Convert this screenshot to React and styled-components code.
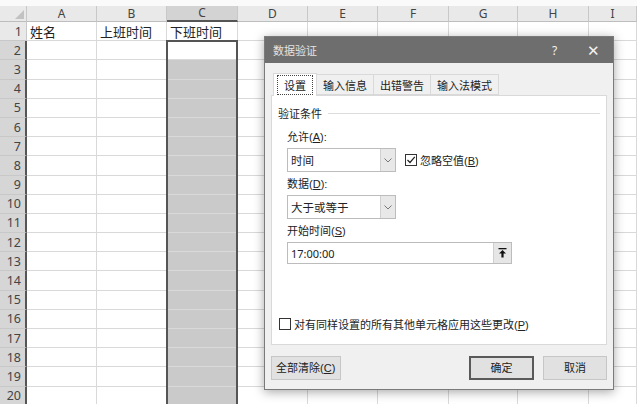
import React from "react";
import styled, { createGlobalStyle } from "styled-components";

const Global = createGlobalStyle`
  html, body { margin: 0; padding: 0; background: #fff; }
  body { font-family: "Liberation Sans", "Noto Sans CJK SC", sans-serif; overflow: hidden; }
  * { box-sizing: border-box; }
`;

const Page = styled.div`
  position: relative;
  width: 637px;
  height: 404px;
  overflow: hidden;
`;

const Sheet = styled.div`
  display: grid;
  grid-template-columns: 27px 70px 70px 71px 70px 70px 71px 69px 71px 1fr;
  grid-template-rows: 6px 16px repeat(20, 19.2px);
  width: 637px;
`;

const TopStrip = styled.div`
  grid-column: 1 / -1;
  grid-row: 1;
  background: #fafafa;
`;

const Corner = styled.div`
  grid-column: 1;
  grid-row: 2;
  background: #e9e9e9;
  border-right: 1px solid #c8c8c8;
  border-bottom: 1px solid #bdbdbd;
  position: relative;
  &::after {
    content: "";
    position: absolute;
    right: 2px;
    bottom: 2px;
    border-left: 9px solid transparent;
    border-bottom: 9px solid #c2c2c2;
  }
`;

const ColHead = styled.div`
  grid-column: ${(p) => p.$c};
  grid-row: 2;
  display: flex;
  align-items: center;
  justify-content: center;
  font-family: "Noto Sans", "DejaVu Sans", sans-serif;
  font-size: 12px;
  color: #444;
  background: ${(p) => (p.$sel ? "#d3d3d3" : "#e9e9e9")};
  border-right: 1px solid #c8c8c8;
  border-bottom: ${(p) => (p.$sel ? "2px solid #555" : "1px solid #bdbdbd")};
  line-height: 1;
`;

const RowHead = styled.div`
  grid-column: 1;
  grid-row: ${(p) => p.$r};
  display: flex;
  align-items: center;
  justify-content: flex-end;
  padding-right: 4px;
  font-family: "Noto Sans", "DejaVu Sans", sans-serif;
  font-size: 12.5px;
  color: #444;
  background: ${(p) => (p.$sel ? "#d6d6d6" : "#e9e9e9")};
  border-right: ${(p) => (p.$sel ? "2px solid #555" : "1px solid #c8c8c8")};
  border-bottom: 1px solid #c8c8c8;
`;

const Cell = styled.div`
  grid-column: ${(p) => p.$c};
  grid-row: ${(p) => p.$r};
  background: ${(p) => (p.$fill ? "#cacaca" : "#fff")};
  border-right: 1px solid #d9d9d9;
  border-bottom: 1px solid #d9d9d9;
  font-size: 13px;
  color: #222;
  display: flex;
  align-items: center;
  padding-left: 3px;
  white-space: nowrap;
  overflow: visible;
`;

const SelFrame = styled.div`
  grid-column: 4;
  grid-row: 4 / 23;
  margin-left: -1px;
  margin-top: -1px;
  border: 2px solid #555;
  z-index: 2;
  pointer-events: none;
`;

/* Dialog */
const Dialog = styled.div`
  position: absolute;
  left: 264px;
  top: 36px;
  width: 350px;
  height: 354px;
  background: #f0f0f0;
  border: 1px solid #7a7a7a;
  box-shadow: 0 2px 10px rgba(0, 0, 0, 0.35);
  display: flex;
  flex-direction: column;
  z-index: 5;
  font-size: 11px;
  color: #222;
`;

const TitleBar = styled.div`
  height: 26px;
  background: #6e6e6e;
  color: #e4e4e4;
  display: flex;
  align-items: center;
  padding-left: 8px;
  font-size: 11px;
`;

const TitleText = styled.div`
  flex: 1;
`;

const TitleBtn = styled.div`
  width: 39px;
  text-align: center;
  color: #f2f2f2;
  font-family: "Noto Sans", sans-serif;
  font-size: ${(p) => p.$size || 12}px;
`;

const Body = styled.div`
  flex: 1;
  display: flex;
  flex-direction: column;
  padding: 9px 6px 8px 6px;
`;

const Tabs = styled.div`
  display: flex;
  align-items: flex-end;
  height: 23px;
  padding-left: 2px;
`;

const Tab = styled.div`
  height: ${(p) => (p.$active ? 23 : 21)}px;
  padding: ${(p) => (p.$active ? "2px 3px" : "0 6px")};
  display: flex;
  align-items: center;
  background: ${(p) => (p.$active ? "#fff" : "#f0f0f0")};
  border: 1px solid #d9d9d9;
  border-bottom: ${(p) => (p.$active ? "none" : "1px solid #d9d9d9")};
  margin-left: ${(p) => (p.$first ? 0 : -1)}px;
  position: relative;
  z-index: ${(p) => (p.$active ? 2 : 1)};
  margin-bottom: ${(p) => (p.$active ? -1 : 0)}px;
`;

const FocusBox = styled.span`
  border: 1px dotted #444;
  padding: 1px 6px;
`;

const Panel = styled.div`
  height: 250px;
  background: #fff;
  border: 1px solid #d9d9d9;
  display: flex;
  flex-direction: column;
  padding: 9px 6px 0 6px;
`;

const GroupTitle = styled.div`
  display: flex;
  align-items: center;
  gap: 6px;
  height: 16px;
  &::after {
    content: "";
    flex: 1;
    height: 1px;
    background: #dcdcdc;
  }
`;

const Indent = styled.div`
  padding-left: 9px;
  display: flex;
  flex-direction: column;
`;

const Label = styled.div`
  height: 16px;
  line-height: 16px;
  margin-top: ${(p) => p.$mt || 0}px;
  margin-bottom: 3px;
`;

const U = styled.span`
  text-decoration: underline;
  text-underline-offset: 1px;
`;

const Row = styled.div`
  display: flex;
  align-items: center;
  gap: 9px;
`;

const Select = styled.div`
  width: 109px;
  height: 24px;
  border: 1px solid #bcbcbc;
  display: flex;
  align-items: stretch;
  background: #fff;
`;

const SelectText = styled.div`
  flex: 1;
  display: flex;
  align-items: center;
  padding-left: 3px;
  font-size: 11.5px;
`;

const DropBtn = styled.div`
  width: 15px;
  background: #e8e8e8;
  border-left: 1px solid #d0d0d0;
  display: flex;
  align-items: center;
  justify-content: center;
`;

const CheckLabel = styled.label`
  display: flex;
  align-items: center;
  gap: 3px;
`;

const CheckText = styled.span`
  white-space: nowrap;
`;

const Box = styled.span`
  width: 12px;
  height: 12px;
  border: 1px solid #333;
  background: #fff;
  display: flex;
  align-items: center;
  justify-content: center;
`;

const Input = styled.div`
  width: 225px;
  height: 22px;
  border: 1px solid #bcbcbc;
  display: flex;
  align-items: stretch;
`;

const InputText = styled.div`
  flex: 1;
  display: flex;
  align-items: center;
  padding-left: 3px;
  font-family: "Noto Sans", "DejaVu Sans", sans-serif;
  font-size: 11px;
`;

const RefBtn = styled.div`
  width: 18px;
  background: #e6e6e6;
  border-left: 1px solid #d0d0d0;
  display: flex;
  align-items: center;
  justify-content: center;
`;

const Spacer = styled.div`
  flex: 1;
`;

const BottomCheck = styled.div`
  padding-bottom: 12px;
  padding-left: 1px;
`;

const Buttons = styled.div`
  display: flex;
  align-items: center;
  margin-top: 11px;
  gap: 9px;
`;

const Btn = styled.div`
  height: 24px;
  width: ${(p) => p.$w}px;
  line-height: ${(p) => (p.$def ? 20 : 22)}px;
  background: #e1e1e1;
  border: ${(p) => (p.$def ? "2px solid #5a5a5a" : "1px solid #c6c6c6")};
  padding: ${(p) => (p.$left ? "0 4px" : "0")};
  text-align: ${(p) => (p.$left ? "left" : "center")};
  white-space: nowrap;
`;

const Chevron = () => (
  <svg width="8" height="5" viewBox="0 0 8 5">
    <path d="M0.5 0.5 L4 4 L7.5 0.5" fill="none" stroke="#777" strokeWidth="1" />
  </svg>
);

const Tick = () => (
  <svg width="10" height="10" viewBox="0 0 10 10">
    <path d="M1.5 5 L4 7.5 L8.8 1.8" fill="none" stroke="#222" strokeWidth="1.2" />
  </svg>
);

const UpArrow = () => (
  <svg width="9" height="10" viewBox="0 0 9 10">
    <rect x="0.5" y="0" width="8" height="1.3" fill="#111" />
    <path d="M4.5 2 L8 5.6 L5.6 5.6 L5.6 9.5 L3.4 9.5 L3.4 5.6 L1 5.6 Z" fill="#111" />
  </svg>
);

const cols = ["A", "B", "C", "D", "E", "F", "G", "H", "I"];
const header1 = { 0: "姓名", 1: "上班时间", 2: "下班时间" };

export default function App() {
  const rows = Array.from({ length: 20 }, (_, i) => i + 1);
  return (
    <Page>
      <Global />
      <Sheet>
        <TopStrip />
        <Corner />
        {cols.map((c, i) => (
          <ColHead key={c} $c={i + 2} $sel={c === "C"}>
            {c}
          </ColHead>
        ))}
        {rows.map((r) => (
          <React.Fragment key={r}>
            <RowHead $r={r + 2} $sel={r >= 2}>
              {r}
            </RowHead>
            {cols.map((c, i) => (
              <Cell key={c} $c={i + 2} $r={r + 2} $fill={c === "C" && r >= 3}>
                {r === 1 ? header1[i] : null}
              </Cell>
            ))}
          </React.Fragment>
        ))}
        <SelFrame />
      </Sheet>

      <Dialog>
        <TitleBar>
          <TitleText>数据验证</TitleText>
          <TitleBtn $size={12}>?</TitleBtn>
          <TitleBtn $size={15}>✕</TitleBtn>
        </TitleBar>
        <Body>
          <Tabs>
            <Tab $active $first>
              <FocusBox>设置</FocusBox>
            </Tab>
            <Tab>输入信息</Tab>
            <Tab>出错警告</Tab>
            <Tab>输入法模式</Tab>
          </Tabs>
          <Panel>
            <GroupTitle>验证条件</GroupTitle>
            <Indent>
              <Label $mt={8}>
                允许(<U>A</U>):
              </Label>
              <Row>
                <Select>
                  <SelectText>时间</SelectText>
                  <DropBtn>
                    <Chevron />
                  </DropBtn>
                </Select>
                <CheckLabel>
                  <Box>
                    <Tick />
                  </Box>
                  <CheckText>
                    忽略空值(<U>B</U>)
                  </CheckText>
                </CheckLabel>
              </Row>
              <Label $mt={4}>
                数据(<U>D</U>):
              </Label>
              <Select>
                <SelectText>大于或等于</SelectText>
                <DropBtn>
                  <Chevron />
                </DropBtn>
              </Select>
              <Label $mt={4}>
                开始时间(<U>S</U>)
              </Label>
              <Input>
                <InputText>17:00:00</InputText>
                <RefBtn>
                  <UpArrow />
                </RefBtn>
              </Input>
            </Indent>
            <Spacer />
            <BottomCheck>
              <CheckLabel>
                <Box />
                <CheckText>
                  对有同样设置的所有其他单元格应用这些更改(<U>P</U>)
                </CheckText>
              </CheckLabel>
            </BottomCheck>
          </Panel>
          <Buttons>
            <Btn $w={70} $left>
              全部清除(<U>C</U>)
            </Btn>
            <Spacer />
            <Btn $w={65} $def>
              确定
            </Btn>
            <Btn $w={64}>取消</Btn>
          </Buttons>
        </Body>
      </Dialog>
    </Page>
  );
}
